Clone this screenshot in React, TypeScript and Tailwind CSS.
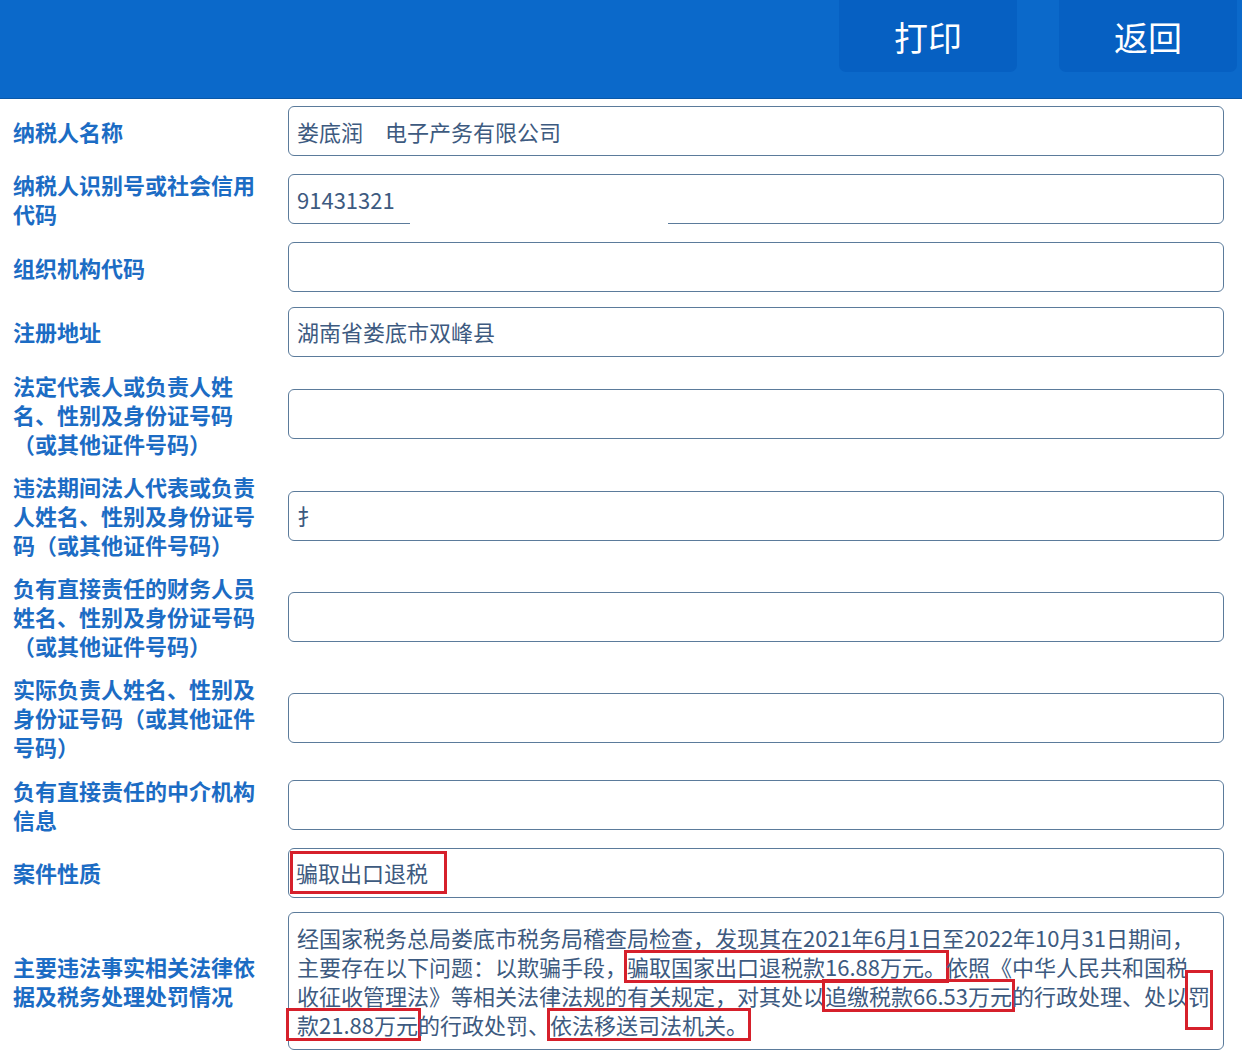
import React from "react";

const font = { fontFamily: '"Noto Sans CJK SC", "Microsoft YaHei", sans-serif' };

type Row = { label: string; value?: React.ReactNode; cover?: boolean };

const mark = "inline-block leading-[27px] outline-solid outline-3 outline-[#d6202b]";

const rows: Row[] = [
  { label: "纳税人名称", value: "娄底润　电子产务有限公司" },
  { label: "纳税人识别号或社会信用代码", value: "91431321", cover: true },
  { label: "组织机构代码" },
  { label: "注册地址", value: "湖南省娄底市双峰县" },
  { label: "法定代表人或负责人姓名、性别及身份证号码（或其他证件号码）" },
  { label: "违法期间法人代表或负责人姓名、性别及身份证号码（或其他证件号码）", value: "扌" },
  { label: "负有直接责任的财务人员姓名、性别及身份证号码（或其他证件号码）" },
  { label: "实际负责人姓名、性别及身份证号码（或其他证件号码）" },
  { label: "负有直接责任的中介机构信息" },
  {
    label: "案件性质",
    value: (
      <span className="-ml-[7px] inline-block h-[43px] border-[3px] border-[#d6202b] pl-[3px] pr-[16px] leading-[37px]">
        骗取出口退税
      </span>
    ),
  },
];

function Field({ label, value, cover }: Row) {
  return (
    <div className="flex items-center py-[7.1px] pl-[13px] pr-[18px]">
      <div className="w-[244px] shrink-0 text-[22px] font-bold leading-[29px] text-[#1c6cc4]">{label}</div>
      <div className="relative ml-[31px] flex h-[50px] flex-1 items-center rounded-[6px] border-[1.5px] border-[#5b7b9b] bg-white px-[8px] text-[22px] text-[#3d5a80]">
        {value}
        {cover && <div className="absolute -bottom-[3px] left-[121px] h-[7px] w-[258px] bg-white" />}
      </div>
    </div>
  );
}

export default function App() {
  return (
    <div className="min-h-screen bg-white" style={font}>
      <header className="flex h-[99px] justify-end gap-[42px] border-b border-[#0a58a8] bg-[#0b69ca] pr-[5px]">
        {["打印", "返回"].map((t) => (
          <button
            key={t}
            className="flex h-[72px] w-[178px] items-center justify-center rounded-b-[7px] bg-[#0660c2] text-[34px] text-white"
          >
            {t}
          </button>
        ))}
      </header>

      {rows.map((r) => (
        <Field key={r.label} {...r} />
      ))}

      <div className="flex items-center py-[7.1px] pl-[13px] pr-[18px]">
        <div className="w-[244px] shrink-0 text-[22px] font-bold leading-[29px] text-[#1c6cc4]">
          主要违法事实相关法律依据及税务处理处罚情况
        </div>
        <div className="ml-[31px] flex-1 whitespace-nowrap rounded-[6px] border-[1.5px] border-[#5b7b9b] bg-white px-[8px] pb-[10px] pt-[10px] text-[22px] leading-[29px] text-[#3d5a80]">
          <div>经国家税务总局娄底市税务局稽查局检查，发现其在2021年6月1日至2022年10月31日期间，</div>
          <div>
            主要存在以下问题：以欺骗手段，<span className={mark}>骗取国家出口退税款16.88万元。</span>依照《中华人民共和国税
          </div>
          <div>
            收征收管理法》等相关法律法规的有关规定，对其处以<span className={mark}>追缴税款66.53万元</span>的行政处理、处以
            <span className="outline-solid outline-3 outline-[#d6202b] pb-[16px] pt-[6px]">罚</span>
          </div>
          <div>
            <span className={`${mark} -ml-[8px] pl-[8px]`}>款21.88万元</span>的行政处罚、
            <span className={mark}>依法移送司法机关。</span>
          </div>
        </div>
      </div>
    </div>
  );
}
